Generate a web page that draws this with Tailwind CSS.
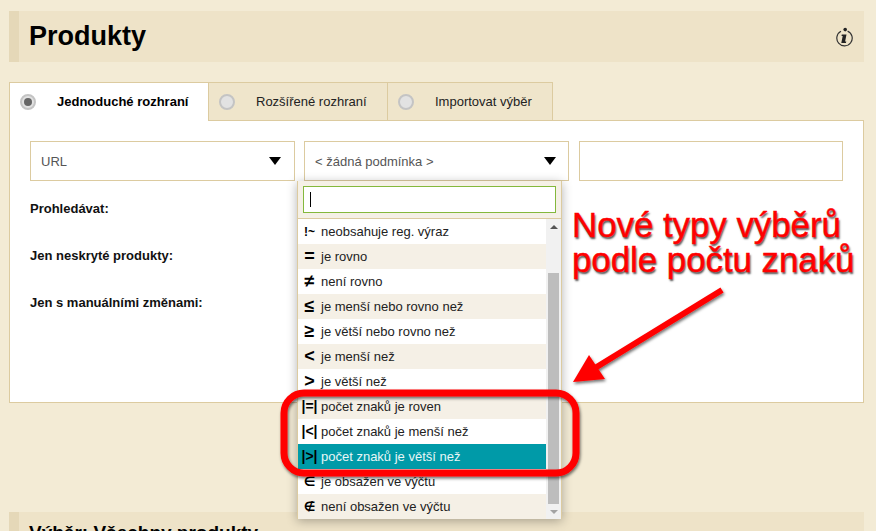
<!DOCTYPE html>
<html lang="cs">
<head>
  <meta charset="UTF-8" />
  <title>Produkty</title>
  <script src="https://cdn.jsdelivr.net/npm/@tailwindcss/browser@4"></script>
</head>
<body class="relative h-[531px] w-[876px] overflow-hidden bg-[#f3ebd5] font-['Liberation_Sans',Arial,sans-serif] text-[13px] text-black">

<div class="ml-[9px] h-[520px] w-[855px] pt-[11px]">
  <!-- page heading -->
  <header class="flex h-[51px] items-center justify-between border-l-[10px] border-[#e5d8b8] bg-[#eee3c8] pl-[10px] pr-[11px]">
    <h1 class="text-[27px] font-bold leading-none">Produkty</h1>
    <svg class="h-[20px] w-[18px]" viewBox="0 0 18 20" fill="none">
      <path d="M6 4.300A7.700 7.700 0 1 0 12.600 4.100" stroke="#333" stroke-width="1.200" />
      <circle cx="10.200" cy="2.600" r="1.800" fill="#222" />
      <path d="M6.800 7.400h4.700l-1.400 7h1.200l-.4 1.500H6.300l1.400-7H6.500z" fill="#222" />
    </svg>
  </header>

  <!-- tabs -->
  <div class="relative z-10 mt-[20px] -mb-px flex h-[39px]">
    <div class="flex w-[200px] items-center border-x border-t border-[#dccba0] bg-white pl-[10px]">
      <span class="flex h-4 w-4 items-center justify-center rounded-full border-2 border-[#c4c4c4] bg-[#e2e2e2]"><span class="h-2 w-2 rounded-full bg-[#666]"></span></span>
      <span class="ml-[21px] font-bold">Jednoduché rozhraní</span>
    </div>
    <div class="flex w-[179px] items-center border-y border-r border-[#dccba0] bg-[#efe5cb] pl-[10px]">
      <span class="h-4 w-4 rounded-full border-2 border-[#c4c4c4] bg-[#e2e2e2]"></span>
      <span class="ml-[21px] text-[#222]">Rozšířené rozhraní</span>
    </div>
    <div class="flex w-[165px] items-center border-y border-r border-[#dccba0] bg-[#efe5cb] pl-[10px]">
      <span class="h-4 w-4 rounded-full border-2 border-[#c4c4c4] bg-[#e2e2e2]"></span>
      <span class="ml-[21px] text-[#222]">Importovat výběr</span>
    </div>
  </div>

  <!-- simple filter panel -->
  <section class="h-[283px] border border-[#dccba0] bg-white pl-5 pt-5">
    <div class="flex">
      <div class="flex h-10 w-[265px] items-center justify-between border border-[#dccba0] pl-[10px] pr-[13px] text-[#555]">
        <span class="pt-px">URL</span>
        <span class="h-0 w-0 border-x-[6.500px] border-t-[8px] border-x-transparent border-t-black"></span>
      </div>
      <div class="ml-[9px] flex h-10 w-[265px] items-center justify-between border border-[#dccba0] pl-[10px] pr-[12px] text-[#555]">
        <span class="pt-px">&lt; žádná podmínka &gt;</span>
        <span class="h-0 w-0 border-x-[6.500px] border-t-[8px] border-x-transparent border-t-black"></span>
      </div>
      <div class="ml-[10px] h-10 w-[264px] border border-[#dccba0]"></div>
    </div>
    <div class="mt-[20px] flex flex-col gap-[32px] font-bold leading-[15px] text-[#111]">
      <div>Prohledávat:</div>
      <div>Jen neskryté produkty:</div>
      <div>Jen s manuálními změnami:</div>
    </div>
  </section>

  <!-- next section, cut off by the window -->
  <header class="mt-[109px] flex h-[51px] items-start border-l-[10px] border-[#e5d8b8] bg-[#eee3c8] pl-[10px] pt-[11px]">
    <h2 class="text-[19px] font-bold leading-none">Výběr: Všechny produkty</h2>
  </header>
</div>

<!-- open dropdown -->
<div class="absolute left-[297px] top-[181px] z-20 h-[338px] w-[265px] border-x border-b border-[#dccba0] bg-white shadow-[0_2px_10px_rgba(0,0,0,0.3)]">
  <div class="h-[38px] border-b border-[#dccba0] bg-[#f5f0e6] px-[5px] pt-[5px]">
    <div class="flex h-[27px] items-center border border-[#84b83c] bg-white pl-[6px]"><span class="h-[15px] w-px bg-black"></span></div>
  </div>
  <div class="flex">
    <ul class="w-[248px] text-[#222]">
      <li class="flex h-[25px] items-center bg-white"><b class="w-[23px] text-center text-[12px] text-black">!~</b>neobsahuje reg. výraz</li>
      <li class="flex h-[25px] items-center bg-[#f5f0e6]"><b class="w-[23px] text-center text-[18px] text-black">=</b>je rovno</li>
      <li class="flex h-[25px] items-center bg-white"><b class="w-[23px] text-center text-[18px] text-black">≠</b>není rovno</li>
      <li class="flex h-[25px] items-center bg-[#f5f0e6]"><b class="w-[23px] text-center text-[18px] text-black">≤</b>je menší nebo rovno než</li>
      <li class="flex h-[25px] items-center bg-white"><b class="w-[23px] text-center text-[18px] text-black">≥</b>je větší nebo rovno než</li>
      <li class="flex h-[25px] items-center bg-[#f5f0e6]"><b class="w-[23px] text-center text-[18px] text-black">&lt;</b>je menší než</li>
      <li class="flex h-[25px] items-center bg-white"><b class="w-[23px] text-center text-[18px] text-black">&gt;</b>je větší než</li>
      <li class="flex h-[25px] items-center bg-[#f5f0e6]"><b class="w-[23px] text-center text-[14px] text-black">|=|</b>počet znaků je roven</li>
      <li class="flex h-[25px] items-center bg-white"><b class="w-[23px] text-center text-[14px] text-black">|&lt;|</b>počet znaků je menší než</li>
      <li class="flex h-[25px] items-center bg-[#009aa8] text-[#e8f6f7]"><b class="w-[23px] text-center text-[14px] text-black">|&gt;|</b>počet znaků je větší než</li>
      <li class="flex h-[25px] items-center bg-white"><b class="w-[23px] text-center font-['DejaVu_Sans'] text-[13px] text-black">∈</b>je obsažen ve výčtu</li>
      <li class="flex h-[25px] items-center bg-[#f5f0e6]"><b class="w-[23px] text-center font-['DejaVu_Sans'] text-[13px] text-black">∉</b>není obsažen ve výčtu</li>
    </ul>
    <div class="flex h-[300px] w-[15px] flex-col bg-[#f1f1f1] px-[2px]">
      <div class="flex h-[15px] items-center justify-center"><span class="h-0 w-0 border-x-4 border-b-[4px] border-x-transparent border-b-[#555]"></span></div>
      <div class="mt-[39px] h-[231px] bg-[#bdbdbd]"></div>
      <div class="mt-auto flex h-[15px] items-center justify-center"><span class="h-0 w-0 border-x-4 border-t-[4px] border-x-transparent border-t-[#a3a3a3]"></span></div>
    </div>
  </div>
</div>

<!-- red annotation drawn over the screenshot -->
<div class="absolute left-[572px] top-[207px] z-30 whitespace-nowrap text-[34.800px] leading-[35px] text-[#ff0000] [-webkit-text-stroke:0.4px_#ff0000] [text-shadow:1px_2px_2px_rgba(0,0,0,0.7)]">Nové typy výběrů<br />podle počtu znaků</div>
<svg class="absolute left-0 top-0 z-30 h-[531px] w-[876px]" viewBox="0 0 876 531" fill="none">
  <defs>
    <filter id="drop" x="-10%" y="-10%" width="120%" height="120%">
      <feDropShadow dx="1" dy="2" stdDeviation="1.500" flood-color="#000" flood-opacity="0.55" />
    </filter>
  </defs>
  <g filter="url(#drop)">
    <rect x="284" y="393" width="292" height="80" rx="20" stroke="#ff0000" stroke-width="7" />
    <path d="M722 290L595 368" stroke="#ff0000" stroke-width="6" />
    <path d="M573 382L589 355L605 379Z" fill="#ff0000" />
  </g>
</svg>

</body>
</html>
